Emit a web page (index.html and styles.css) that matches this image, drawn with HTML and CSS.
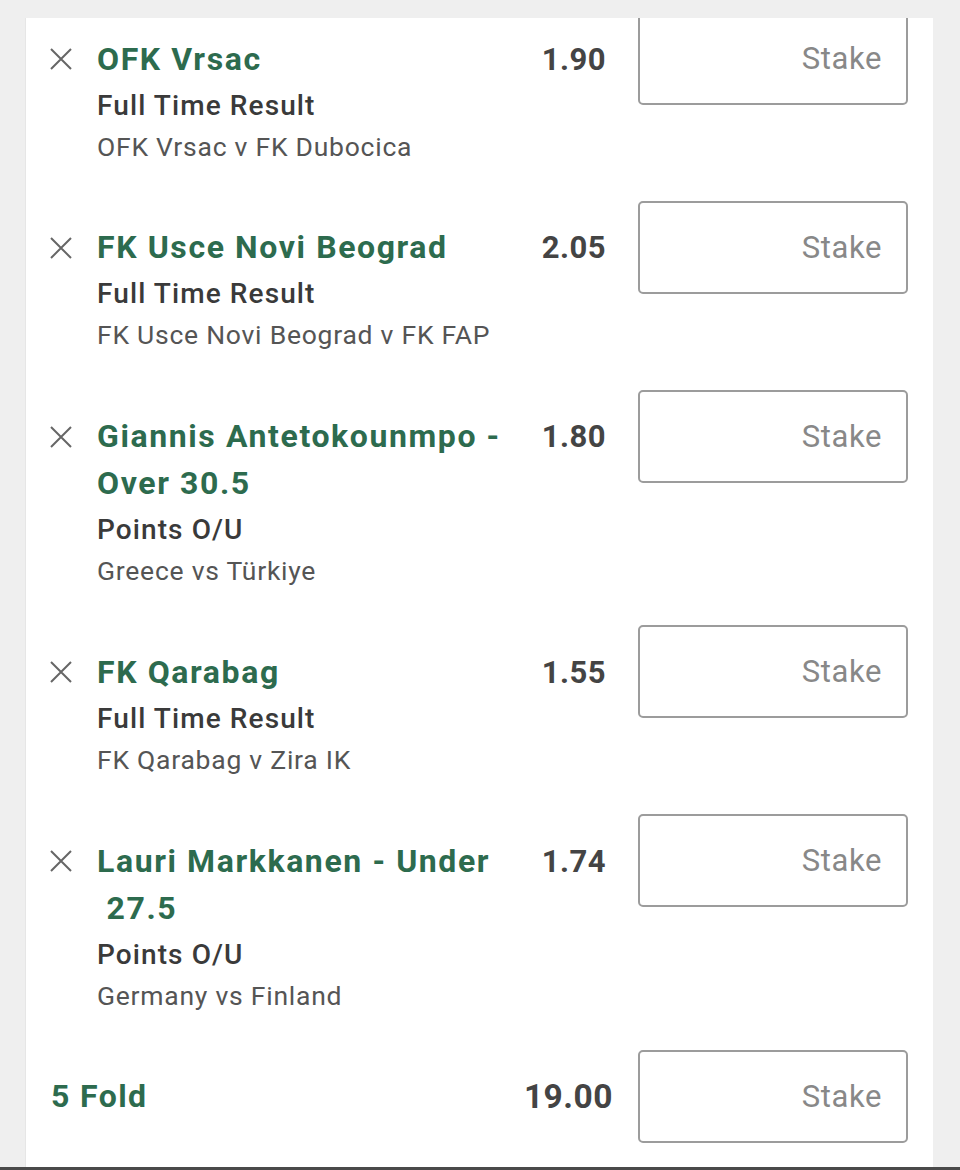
FILE: index.html
```html
<!DOCTYPE html>
<html lang="en">
<head>
<meta charset="utf-8">
<title>Bet Slip</title>
<link rel="stylesheet" href="styles.css">
</head>
<body>
<div class="page">
  <div class="card">
    <div class="slip">
      <div class="bet">
        <div class="remove"><svg viewBox="0 0 22 22" width="22" height="22"><path d="M1 1 L21 21 M21 1 L1 21" stroke="#666" stroke-width="2" fill="none"/></svg></div>
        <div class="info">
          <div class="sel">OFK Vrsac</div>
          <div class="market">Full Time Result</div>
          <div class="event">OFK Vrsac v FK Dubocica</div>
        </div>
        <div class="odds">1.90</div>
        <div class="stake">Stake</div>
      </div>
      <div class="bet">
        <div class="remove"><svg viewBox="0 0 22 22" width="22" height="22"><path d="M1 1 L21 21 M21 1 L1 21" stroke="#666" stroke-width="2" fill="none"/></svg></div>
        <div class="info">
          <div class="sel">FK Usce Novi Beograd</div>
          <div class="market">Full Time Result</div>
          <div class="event">FK Usce Novi Beograd v FK FAP</div>
        </div>
        <div class="odds">2.05</div>
        <div class="stake">Stake</div>
      </div>
      <div class="bet">
        <div class="remove"><svg viewBox="0 0 22 22" width="22" height="22"><path d="M1 1 L21 21 M21 1 L1 21" stroke="#666" stroke-width="2" fill="none"/></svg></div>
        <div class="info">
          <div class="sel">Giannis Antetokounmpo - Over 30.5</div>
          <div class="market">Points O/U</div>
          <div class="event">Greece vs Türkiye</div>
        </div>
        <div class="odds">1.80</div>
        <div class="stake">Stake</div>
      </div>
      <div class="bet">
        <div class="remove"><svg viewBox="0 0 22 22" width="22" height="22"><path d="M1 1 L21 21 M21 1 L1 21" stroke="#666" stroke-width="2" fill="none"/></svg></div>
        <div class="info">
          <div class="sel">FK Qarabag</div>
          <div class="market">Full Time Result</div>
          <div class="event">FK Qarabag v Zira IK</div>
        </div>
        <div class="odds">1.55</div>
        <div class="stake">Stake</div>
      </div>
      <div class="bet">
        <div class="remove"><svg viewBox="0 0 22 22" width="22" height="22"><path d="M1 1 L21 21 M21 1 L1 21" stroke="#666" stroke-width="2" fill="none"/></svg></div>
        <div class="info">
          <div class="sel">Lauri Markkanen - Under &nbsp;27.5</div>
          <div class="market">Points O/U</div>
          <div class="event">Germany vs Finland</div>
        </div>
        <div class="odds">1.74</div>
        <div class="stake">Stake</div>
      </div>
      <div class="fold">
        <div class="fold-name">5 Fold</div>
        <div class="fold-odds">19.00</div>
        <div class="stake">Stake</div>
      </div>
    </div>
  </div>
  <div class="navbar"></div>
</div>
</body>
</html>
```
FILE: styles.css
```css
html, body {
  margin: 0;
  padding: 0;
  background: #efefef;
  font-family: Roboto, "Noto Sans", sans-serif;
  overflow: hidden;
}
.page {
  width: 960px;
  height: 1170px;
  padding-top: 18px;
  box-sizing: border-box;
  display: flex;
  flex-direction: column;
}
.card {
  margin-left: 26px;
  width: 907px;
  height: 1149px;
  background: #fff;
  overflow: hidden;
  box-shadow: -1px 0 0 #e6e6e6;
}
.slip {
  margin-top: -6px;
}
.bet {
  display: grid;
  grid-template-columns: 47px 1fr 112px 270px;
  align-items: start;
  padding-left: 24px;
  padding-right: 25px;
  padding-bottom: 36.3px;
}
.remove {
  margin-top: 36px;
  width: 22px;
  height: 22px;
}
.remove svg { display: block; }
.info {
  padding-top: 23.5px;
  padding-right: 10px;
}
.sel {
  font-size: 32px;
  line-height: 47px;
  font-weight: 700;
  letter-spacing: 1.6px;
  color: #2d6b4e;
}
.market {
  font-size: 28px;
  line-height: 45px;
  font-weight: 500;
  letter-spacing: 1.1px;
  color: #3a3a3a;
}
.event {
  font-size: 26.5px;
  line-height: 37px;
  font-weight: 400;
  letter-spacing: 0.75px;
  color: #555;
}
.odds {
  padding-top: 23.5px;
  line-height: 47px;
  font-size: 31px;
  font-weight: 700;
  letter-spacing: 0.5px;
  color: #444;
  text-align: right;
  padding-right: 32px;
}
.stake {
  height: 93px;
  box-sizing: border-box;
  border: 2px solid #9c9c9c;
  border-radius: 5px;
  display: flex;
  align-items: center;
  justify-content: flex-end;
  padding-right: 24px;
  font-size: 31px;
  letter-spacing: 0.6px;
  color: #888;
}
.fold {
  display: grid;
  grid-template-columns: 1fr auto 270px;
  align-items: center;
  padding-left: 25px;
  padding-right: 25px;
  padding-bottom: 24px;
}
.fold-name {
  font-size: 32px;
  font-weight: 700;
  letter-spacing: 1.4px;
  color: #2d6b4e;
}
.fold-odds {
  font-size: 33.5px;
  font-weight: 700;
  letter-spacing: 0.5px;
  color: #444;
  margin-right: 25px;
}
.navbar {
  height: 3px;
  background: #4a4a4a;
}
```
